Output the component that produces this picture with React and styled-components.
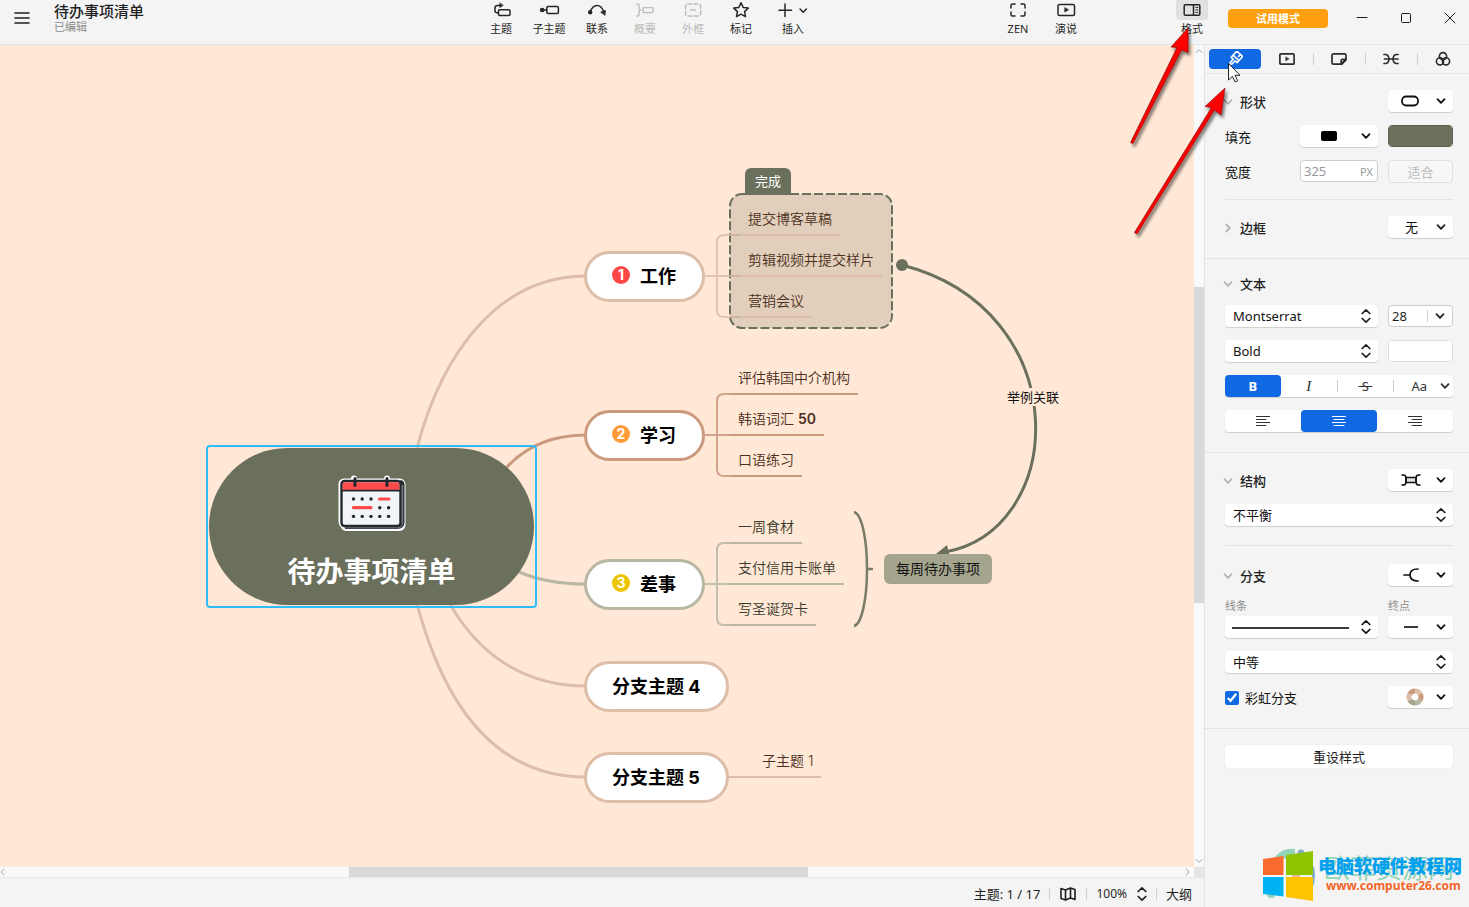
import React, { useState } from "react";
import styled, { createGlobalStyle } from "styled-components";

const UI_FONT = `"Noto Sans", "Noto Sans CJK SC", sans-serif`;
const MAP_FONT = `"Inter", "Noto Sans CJK SC", sans-serif`;

const GlobalStyle = createGlobalStyle`
  * {
    box-sizing: border-box;
  }
  body {
    margin: 0;
    background: #f4f4f4;
    color: #1f1f1f;
    font-family: ${UI_FONT};
    font-size: 13px;
  }
  button, input, select {
    font: inherit;
    color: inherit;
    margin: 0;
  }
  button {
    border: none;
    background: transparent;
    padding: 0;
    cursor: pointer;
  }
  svg {
    display: block;
  }
`;

/* ---------- icons ---------- */

const Icon = ({ w = 24, h = 20, sw = 1.5, children }) => (
  <svg
    width={w}
    height={h}
    viewBox={`0 0 ${w} ${h}`}
    fill="none"
    stroke="currentColor"
    strokeWidth={sw}
    strokeLinecap="round"
    strokeLinejoin="round"
    aria-hidden="true"
  >
    {children}
  </svg>
);

const TopicIcon = () => (
  <Icon>
    <rect x="9.5" y="9.8" width="11.5" height="5.6" rx="1.2" />
    <path d="M9 12.8H8q-2 0-2-2V8q0-2.6 2.6-2.6H11" />
    <path d="M10.8 3.2v4.4L14 5.4z" fill="currentColor" strokeWidth="0.6" />
  </Icon>
);
const SubtopicIcon = () => (
  <Icon>
    <circle cx="5.2" cy="10" r="1.6" fill="currentColor" />
    <path d="M6 10h3.5" />
    <rect x="9.8" y="6.6" width="11.6" height="6.8" rx="1.2" />
  </Icon>
);
const RelationIcon = () => (
  <Icon>
    <circle cx="5.2" cy="12.2" r="1.5" fill="currentColor" />
    <path d="M5.2 11.8C8.5 3.4 15.5 3.4 18.6 11.4" />
    <path d="M16 12l4.4-1.6-.4 4.6z" fill="currentColor" strokeWidth="0.8" />
  </Icon>
);
const SummaryIcon = () => (
  <Icon sw={1.4}>
    <path d="M4 4h.6q1.500 0 1.500 1.500v2.800Q6.100 10 7.600 10 6.100 10 6.100 11.700v2.800q0 1.500-1.500 1.500H4" />
    <rect x="10" y="7.600" width="10" height="5" rx="1" />
  </Icon>
);
const BoundaryIcon = () => (
  <Icon sw={1.4}>
    <rect x="4.600" y="4" width="15" height="12" rx="2" strokeDasharray="4 2.200" />
    <path d="M9.500 10h5" />
  </Icon>
);
const StarIcon = () => (
  <Icon>
    <path d="M12 2.800l2.200 4.600 5 .7-3.600 3.500.9 5-4.500-2.400-4.500 2.400.9-5L4.800 8.100l5-.7z" />
  </Icon>
);
const InsertIcon = () => (
  <Icon w={34}>
    <path d="M9 4v12.500M3 10.200h12.500M24 9l3.200 3.200L30.400 9" />
  </Icon>
);
const ZenIcon = () => (
  <Icon>
    <path d="M5 8V5.500Q5 4 6.500 4H9M15 4h2.500Q19 4 19 5.500V8M19 12v2.500q0 1.500-1.500 1.500H15M9 16H6.500Q5 16 5 14.500V12" />
  </Icon>
);
const PlayIcon = () => (
  <Icon>
    <rect x="4" y="4.500" width="16.500" height="11" rx="1.600" />
    <path d="M10.800 8v4l3.400-2z" fill="currentColor" strokeWidth="0.8" />
  </Icon>
);
const FormatIcon = () => (
  <Icon w={32}>
    <rect x="8.200" y="4.700" width="15.600" height="10.600" rx="1" />
    <path d="M17.500 5v10" />
    <path d="M19.800 7.400h2M19.800 9.900h2M19.800 12.400h2" strokeWidth="1" />
  </Icon>
);
const BrushIcon = () => (
  <Icon w={16} h={16} sw={1.6}>
    <g transform="rotate(42 8 8)">
      <path d="M4 1h8v5.500H4zM4 6.500v2.800h2.800v4q0 1.200 1.200 1.200t1.200-1.200v-4H12V6.500M9 1v2.800" />
    </g>
  </Icon>
);
const TabPlayIcon = () => (
  <Icon w={16} h={16} sw={1.7}>
    <rect x=".9" y="2.800" width="14.200" height="10.400" rx="1" />
    <path d="M6.800 6.200v3.600L9.800 8z" fill="currentColor" strokeWidth="0.6" />
  </Icon>
);
const NoteIcon = () => (
  <Icon w={16} h={16} sw={1.7}>
    <path d="M2.500 2.800h11q1.500 0 1.500 1.500V9l-4.200 4.200H2.500Q1 13.200 1 11.700V4.300q0-1.500 1.500-1.500z" />
    <path d="M14.800 8.300h-3.300q-1.300 0-1.300 1.300v3.500z" />
  </Icon>
);
const BranchesIcon = () => (
  <Icon w={16} h={16} sw={1.7}>
    <path d="M1 3.500h1.500q3 0 3.600 4.500-.6 4.500-3.600 4.500H1M1.500 8h13.500M15 3.500h-1.500q-3 0-3.600 4.500.6 4.500 3.600 4.500H15" />
  </Icon>
);
const RingsIcon = () => (
  <Icon w={16} h={16} sw={1.6}>
    <circle cx="8" cy="5.200" r="3.600" />
    <circle cx="5" cy="10.300" r="3.600" />
    <circle cx="11" cy="10.300" r="3.600" />
  </Icon>
);
const ChevronDown = () => (
  <Icon w={10} h={10} sw={1.8}>
    <path d="M1.500 3.200L5 6.800l3.500-3.600" />
  </Icon>
);
const ChevronRight = () => (
  <Icon w={10} h={10} sw={1.8}>
    <path d="M3.200 1.500L6.800 5 3.200 8.500" />
  </Icon>
);
const UpDown = () => (
  <Icon w={10} h={16} sw={1.7}>
    <path d="M1.200 5.500L5 1.800l3.800 3.700M1.200 10.500L5 14.200l3.800-3.700" />
  </Icon>
);
const AlignIcon = ({ side }) => {
  const x = { left: 0, center: 2, right: 4 }[side];
  return (
    <Icon w={14} h={12} sw={1}>
      <path d={`M0 1.500h14M${x} 4.500h10M0 7.500h14M${x} 10.500h10`} />
    </Icon>
  );
};

/* ---------- shell ---------- */

const Page = styled.div`
  position: relative;
  display: flex;
  flex-direction: column;
  min-height: 100vh;
  overflow: hidden;
`;

const Header = styled.header`
  display: flex;
  align-items: flex-start;
  height: 45px;
  border-bottom: 1px solid #e3e5e8;
`;

const TitleArea = styled.div`
  display: flex;
  flex: 0 1 477px;
  align-items: center;
  gap: 24px;
  padding: 2px 0 0 14px;
  h1 {
    margin: 0;
    font-size: 15px;
    line-height: 18px;
    font-weight: 500;
  }
  p {
    margin: 0;
    font-size: 11px;
    line-height: 14px;
    color: #8a8a8a;
  }
`;

const Spacer = styled.div`
  flex: 1;
`;

const ToolGroup = styled.div`
  display: flex;
  margin-right: ${(p) => p.$after || 0}px;
`;

const Tool = styled.button`
  display: flex;
  flex-direction: column;
  align-items: center;
  width: ${(p) => (p.$wide ? 56 : 48)}px;
  font-size: 11px;
  line-height: 18px;
  white-space: nowrap;
  color: #262626;
  &:disabled {
    color: #bcbcbc;
  }
`;

const ToolIcon = styled.span`
  border-radius: 0 0 4px 4px;
  background: ${(p) => (p.$on ? "#e1e1e1" : "transparent")};
`;

const TrialButton = styled.button`
  width: 100px;
  height: 19px;
  margin: 9px 28px 0 12px;
  border-radius: 4px;
  background: #ff9f0f;
  color: #fff;
  font-size: 11px;
  line-height: 19px;
  font-weight: 700;
`;

const WindowButtons = styled.div`
  display: flex;
  gap: 32px;
  padding: 12px 13px 0 0;
`;

const Body = styled.div`
  display: flex;
  flex: 1;
`;

const Workspace = styled.main`
  display: grid;
  flex: 1;
  min-width: 0;
  grid-template-columns: 1fr 10px;
  grid-template-rows: 1fr 10px auto;
`;

const Canvas = styled.div`
  position: relative;
  overflow: hidden;
  background: #ffe8d6;
  font-family: ${MAP_FONT};
`;

const ScrollBar = styled.div`
  display: flex;
  flex-direction: ${(p) => (p.$vertical ? "column" : "row")};
  align-items: center;
  background: #f9f9f9;
  color: #a8a8a8;
`;

const Rail = styled.div`
  display: grid;
  flex: 1;
  align-self: stretch;
  grid-template: ${(p) => (p.$vertical ? "230fr 316fr 252fr / 1fr" : "1fr / 339fr 459fr 376fr")};
`;

const Thumb = styled.div`
  grid-area: ${(p) => (p.$vertical ? "2 / 1" : "1 / 2")};
  background: #d9d9d9;
`;

const Corner = styled.div`
  background: #e6e6e6;
`;

const StatusBar = styled.footer`
  grid-column: 1 / -1;
  display: flex;
  justify-content: flex-end;
  align-items: center;
  gap: 9px;
  height: 30px;
  padding: 2px 12px 0 0;
  border-top: 1px solid #e6e6e6;
`;

const StatusButton = styled.button`
  display: flex;
  align-items: center;
  gap: 10px;
  font-size: ${(p) => (p.$small ? 12 : 13)}px;
`;

const Bar = styled.i`
  width: 1px;
  height: 12px;
  background: #cfcfcf;
`;

/* ---------- mind map ---------- */

const Wires = styled.svg`
  position: absolute;
  left: 0;
  top: 0;
`;

const Placed = styled.div`
  position: absolute;
  left: ${(p) => p.$x}px;
  top: ${(p) => p.$y}px;
`;

const Root = styled(Placed)`
  padding: 1px;
  border: 2px solid #2ebcfb;
  border-radius: 4px;
`;

const RootShape = styled.div`
  display: flex;
  flex-direction: column;
  align-items: center;
  gap: 20px;
  width: 325px;
  height: 157px;
  padding-top: 27px;
  border-radius: 79px;
  background: #6b705c;
  color: #fff;
  font-size: 28px;
  line-height: 40px;
  font-weight: 700;
`;

const Branch = styled(Placed)`
  display: flex;
  align-items: center;
  gap: 10px;
  height: 51px;
  padding: 0 26px 3px 25px;
  border: 3px solid ${(p) => p.$color};
  border-radius: 26px;
  background: #fff;
  color: #000;
  font-size: 18px;
  font-weight: 700;
  white-space: nowrap;
`;

const Marker = styled.span`
  width: 18px;
  height: 18px;
  border-radius: 50%;
  background: ${(p) => p.$color};
  color: #fff;
  font-size: 14px;
  line-height: 18px;
  text-align: center;
`;

const Leaves = styled(Placed)`
  display: flex;
  flex-direction: column;
  align-items: flex-start;
  gap: 12px;
`;

const Leaf = styled.div`
  height: 29px;
  padding: 0 8px;
  border-bottom: 2px solid ${(p) => p.$color};
  color: ${(p) => p.$ink || "#4d2f20"};
  font-size: 14px;
  line-height: 24px;
  font-weight: 350;
  white-space: nowrap;
  b {
    font-weight: 600;
  }
`;

const BoundaryTag = styled(Placed)`
  height: 27px;
  padding: 0 10px;
  border-radius: 6px 6px 0 0;
  background: #6b705c;
  color: #fff;
  font-size: 13px;
  line-height: 26px;
`;

const LinkLabel = styled(Placed)`
  background: #ffe8d6;
  color: #111;
  font-size: 13px;
  line-height: 18px;
`;

const SummaryTopic = styled(Placed)`
  padding: 0 12px;
  border-radius: 6px;
  background: #a5a58d;
  color: #111;
  font-size: 14px;
  line-height: 30px;
`;

const CalendarIcon = () => (
  <svg width="68" height="57" viewBox="0 0 68 57" aria-hidden="true">
    <path
      d="M6 3.500H13Q13 .5 16 .5t3 3H46Q46 .5 49 .5t3 3H62Q67.500 4.500 67.500 10V49Q67.500 56 61 56H9Q4 56 3 52 .5 50 .5 47V9Q.5 4 6 3.500z"
      fill="#fff"
    />
    <path d="M7 52.500H59Q65 52.500 65 47V10Q65 7 62 6.500" fill="none" stroke="#23282f" strokeWidth="3" />
    <path d="M6.500 52.800H59.500q5-.3 5.200-5.400V10" fill="none" stroke="#8b9096" strokeWidth="1" />
    <rect x="3.500" y="6" width="59" height="45" rx="3" fill="#f2f4f7" stroke="#23282f" strokeWidth="2.400" />
    <path d="M4.700 15V9q0-1.800 2-1.800h52.600q2 0 2 1.800v6z" fill="#ff4b4b" />
    <path d="M4 15.600h58" stroke="#23282f" strokeWidth="1.600" />
    <path d="M17 3.500v7M49 3.500v7" stroke="#23282f" strokeWidth="3" strokeLinecap="round" />
    <path d="M41.500 24h9.500M15.500 32.700h17.500" stroke="#ff4b4b" strokeWidth="3.200" strokeLinecap="round" />
    <g fill="#23282f">
      {[15.5, 24.2, 33].map((x) => (
        <circle key={x} cx={x} cy="24" r="1.700" />
      ))}
      {[41.8, 50.6].map((x) => (
        <circle key={x} cx={x} cy="32.700" r="1.700" />
      ))}
      {[15.5, 24.2, 33, 41.8, 50.6].map((x) => (
        <circle key={x} cx={x} cy="41.400" r="1.700" />
      ))}
    </g>
  </svg>
);

const bracket = (y) =>
  `M705 ${y}H730M730 ${y - 41}h-6q-7 0-7 7v68q0 7 7 7h6`;

const groups = [
  {
    name: "工作",
    n: 1,
    marker: "#ff4646",
    color: "#ddbea9",
    y: 206,
    leafX: 740,
    leaves: ["提交博客草稿", "剪辑视频并提交样片", "营销会议"],
  },
  {
    name: "学习",
    n: 2,
    marker: "#ff9b37",
    color: "#cb997e",
    y: 365,
    leafX: 730,
    leaves: ["评估韩国中介机构", <>韩语词汇 <b>50</b></>, "口语练习"],
  },
  {
    name: "差事",
    n: 3,
    marker: "#ecc500",
    color: "#b7b7a4",
    ink: "#3a3a2c",
    y: 514,
    leafX: 730,
    leaves: ["一周食材", "支付信用卡账单", "写圣诞贺卡"],
  },
];

const MindMap = () => (
  <Canvas>
    <Wires width="1194" height="822" viewBox="0 45 1194 822" fill="none">
      <rect x="730" y="194" width="162" height="134" rx="12" fill="#e1cfbc" stroke="#6b705c" strokeWidth="2" strokeDasharray="9 3" />
      <g strokeWidth="3">
        <path d="M417 448C443 350 500 276 586 276" stroke="#ddbea9" />
        <path d="M506 468C526 446 552 435 586 435" stroke="#cb997e" />
        <path d="M519 572C540 581 560 584 586 584" stroke="#b7b7a4" />
        <path d="M450 604C482 660 530 686 586 686" stroke="#ddbea9" />
        <path d="M417 604C446 712 500 777 586 777" stroke="#ddbea9" />
      </g>
      <g strokeWidth="2" opacity=".85">
        <path d={bracket(276)} stroke="#ddbea9" />
        <path d="M730 235h10M730 276h10M730 317h10" stroke="#ccb09b" />
        <path d={bracket(435)} stroke="#cb997e" />
        <path d={bracket(584)} stroke="#b7b7a4" />
      </g>
      <path d="M728 777h26" stroke="#ddbea9" strokeWidth="2" />
      <path d="M854 512C862 514 867 540 867 569S862 624 854 626M867 569h6" stroke="#6b705c" strokeWidth="2.500" opacity=".9" />
      <path d="M902 265C1077 310 1068 530 945 552" stroke="#6b705c" strokeWidth="3" />
      <circle cx="902" cy="265" r="6" fill="#6b705c" />
      <path d="M936 554l11-9 3 13z" fill="#6b705c" />
    </Wires>

    <Root $x={206} $y={400}>
      <RootShape>
        <CalendarIcon />
        待办事项清单
      </RootShape>
    </Root>

    {groups.map((g) => (
      <React.Fragment key={g.n}>
        <Branch $x={584} $y={g.y} $color={g.color}>
          <Marker $color={g.marker}>{g.n}</Marker>
          {g.name}
        </Branch>
        <Leaves $x={g.leafX} $y={g.y - 44}>
          {g.leaves.map((leaf, i) => (
            <Leaf key={i} $color={g.color} $ink={g.ink}>
              {leaf}
            </Leaf>
          ))}
        </Leaves>
      </React.Fragment>
    ))}
    <Branch $x={584} $y={616} $color="#ddbea9">分支主题 4</Branch>
    <Branch $x={584} $y={707} $color="#ddbea9">分支主题 5</Branch>
    <Leaves $x={754} $y={704}>
      <Leaf $color="#ddbea9">子主题 1</Leaf>
    </Leaves>

    <BoundaryTag $x={745} $y={123}>完成</BoundaryTag>
    <LinkLabel $x={1007} $y={343}>举例关联</LinkLabel>
    <SummaryTopic $x={884} $y={509}>每周待办事项</SummaryTopic>
  </Canvas>
);

/* ---------- side panel ---------- */

const Panel = styled.aside`
  width: 265px;
  border-left: 1px solid #e3e3e3;
  background: #f4f4f4;
`;

const Tabs = styled.div`
  display: flex;
  height: 29px;
  padding: 4px 0 4px 4px;
  border-bottom: 1px solid #e6e6e6;
`;

const Tab = styled.button`
  display: flex;
  flex: 1;
  align-items: center;
  justify-content: center;
  border-radius: 4px;
  background: ${(p) => (p.$on ? "#1068e2" : "transparent")};
  color: ${(p) => (p.$on ? "#fff" : "#2c2c2c")};
`;

const TabBar = styled(Bar)`
  align-self: center;
  margin: 0 -1px 0 0;
`;

const Section = styled.section`
  padding: 16px 16px 19px 20px;
  border-bottom: ${(p) => (p.$last ? "none" : "1px solid #e3e3e3")};
`;

const Stack = styled.div`
  display: flex;
  flex-direction: column;
  gap: 12px;
`;

const Row = styled.div`
  display: grid;
  grid-template-columns: ${(p) => p.$cols || "1fr 65px"};
  gap: 10px;
  align-items: center;
  min-height: ${(p) => (p.$title ? 18 : 23)}px;
`;

const Divider = styled.hr`
  height: 1px;
  margin: ${(p) => p.$space}px 0;
  border: none;
  background: #e3e3e3;
`;

const Fold = styled.button`
  display: flex;
  align-items: center;
  gap: 7px;
  margin-left: -2px;
  font-size: 13px;
  line-height: 18px;
  font-weight: 500;
  svg {
    color: #b4b4b4;
  }
`;

const Label = styled.label`
  color: #111;
  line-height: 18px;
`;

const SmallLabel = styled.label`
  display: block;
  padding-bottom: 3px;
  font-size: 11px;
  line-height: 14px;
  color: #8f8f8f;
`;

const PickerButton = styled.button`
  display: flex;
  width: 100%;
  align-items: center;
  justify-content: flex-end;
  height: 22px;
  margin-bottom: 1px;
  padding-right: 7px;
  gap: ${(p) => p.$gap || 17}px;
  border-radius: 4px;
  background: #fff;
  box-shadow: 0 1px 1px #cfcfcf;
  color: #111;
`;

const SelectBox = styled.div`
  display: grid;
  align-items: center;
  height: 22px;
  margin-bottom: 1px;
  border-radius: 4px;
  background: #fff;
  box-shadow: 0 1px 1px #cfcfcf;
  select,
  svg {
    grid-area: 1 / 1;
  }
  select {
    width: 100%;
    height: 22px;
    padding: 0 24px 0 ${(p) => p.$pad || 8}px;
    border: none;
    border-radius: 4px;
    outline: none;
    appearance: none;
    background: transparent;
    color: #111;
    font-size: 13px;
  }
  svg {
    justify-self: end;
    margin-right: 7px;
    pointer-events: none;
  }
`;

const Field = styled.div`
  display: flex;
  align-items: center;
  height: 22px;
  margin-bottom: 1px;
  border: 1px solid #cdcdcd;
  border-radius: 4px;
  background: #fff;
  input {
    flex: 1;
    width: 0;
    padding: 0 0 0 3px;
    border: none;
    outline: none;
    background: transparent;
  }
  input:disabled {
    color: #9a9a9a;
  }
  span {
    padding-right: 4px;
    font-size: 11px;
    color: #9a9a9a;
  }
  button {
    padding: 0 7px;
  }
`;

const FitButton = styled.button`
  height: 23px;
  border: 1px solid #e0e0e0;
  border-radius: 4px;
  background: #f7f7f7;
  color: #bdbdbd;
`;

const ColorInput = styled.input`
  width: 100%;
  height: 22px;
  margin-bottom: 1px;
  padding: 0;
  border: 1px solid ${(p) => p.$edge};
  border-radius: 4px;
  overflow: hidden;
  appearance: none;
  background: none;
  &::-webkit-color-swatch-wrapper {
    padding: 0;
  }
  &::-webkit-color-swatch {
    border: none;
    border-radius: 0;
  }
`;

const Segments = styled.div`
  display: flex;
  align-items: center;
  height: 22px;
  margin-bottom: 1px;
  border-radius: 4px;
  background: #fff;
  box-shadow: 0 1px 1px #cfcfcf;
`;

const Segment = styled.button`
  display: flex;
  flex: 1;
  align-items: center;
  justify-content: ${(p) => (p.$menu ? "flex-end" : "center")};
  gap: 13px;
  height: 22px;
  padding-right: ${(p) => (p.$menu ? 3 : 0)}px;
  border-radius: 4px;
  background: ${(p) => (p.$on ? "#1068e2" : "transparent")};
  color: ${(p) => (p.$on ? "#fff" : "#333")};
  i {
    font-family: "Liberation Serif", serif;
    font-size: 15px;
  }
`;

const CheckLabel = styled.label`
  display: flex;
  align-items: center;
  gap: 6px;
  color: #111;
  input {
    width: 14px;
    height: 14px;
    accent-color: #1068e2;
  }
`;

const ResetButton = styled.button`
  width: 100%;
  height: 23px;
  border-radius: 4px;
  background: #fff;
  box-shadow: 0 0 1px #ccc;
`;

const tabs = [
  { id: "style", title: "样式", icon: <BrushIcon /> },
  { id: "pitch", title: "演说", icon: <TabPlayIcon /> },
  { id: "sheet", title: "画布", icon: <NoteIcon /> },
  { id: "skeleton", title: "骨架", icon: <BranchesIcon /> },
  { id: "theme", title: "配色", icon: <RingsIcon /> },
];

const Picker = ({ label, gap, children }) => (
  <PickerButton aria-label={label} aria-haspopup="listbox" $gap={gap}>
    {children}
    <ChevronDown />
  </PickerButton>
);

const Choice = ({ label, value, options = [], pad, down }) => (
  <SelectBox $pad={pad}>
    <select aria-label={label} defaultValue={value}>
      {[value, ...options].map((o) => (
        <option key={o}>{o}</option>
      ))}
    </select>
    {down ? <ChevronDown /> : <UpDown />}
  </SelectBox>
);

const FormatPanel = () => {
  const [tab, setTab] = useState("style");
  const [align, setAlign] = useState("center");
  const [bold, setBold] = useState(true);
  const [italic, setItalic] = useState(false);
  const [strike, setStrike] = useState(false);

  return (
    <Panel>
      <Tabs role="tablist">
        {tabs.map((t, i) => (
          <React.Fragment key={t.id}>
            {i > 1 && <TabBar />}
            <Tab role="tab" aria-selected={tab === t.id} aria-label={t.title} $on={tab === t.id} onClick={() => setTab(t.id)}>
              {t.icon}
            </Tab>
          </React.Fragment>
        ))}
      </Tabs>

      <Section>
        <Stack>
          <Row>
            <Fold><ChevronDown />形状</Fold>
            <Picker label="形状">
              <Icon w={18} h={12} sw={1.8}>
                <rect x="1" y="1.500" width="16" height="9" rx="4.200" />
              </Icon>
            </Picker>
          </Row>
          <Row $cols="1fr 78px 65px">
            <Label htmlFor="fill">填充</Label>
            <Picker label="填充样式" gap={24}>
              <Icon w={16} h={10} sw={0}>
                <rect width="16" height="10" rx="2" fill="#000" />
              </Icon>
            </Picker>
            <ColorInput id="fill" type="color" defaultValue="#6b705c" $edge="#5c614f" />
          </Row>
          <Row $cols="1fr 78px 65px">
            <Label htmlFor="width">宽度</Label>
            <Field>
              <input id="width" defaultValue="325" disabled />
              <span>PX</span>
            </Field>
            <FitButton disabled>适合</FitButton>
          </Row>
        </Stack>
        <Divider $space={16} />
        <Row>
          <Fold><ChevronRight />边框</Fold>
          <Choice label="边框" value="无" options={["实线", "虚线"]} pad={17} down />
        </Row>
      </Section>

      <Section>
        <Stack>
          <Row $title>
            <Fold><ChevronDown />文本</Fold>
          </Row>
          <Row>
            <Choice label="字体" value="Montserrat" options={["Roboto"]} />
            <Field>
              <input aria-label="字号" defaultValue="28" />
              <Bar />
              <button aria-label="选择字号"><ChevronDown /></button>
            </Field>
          </Row>
          <Row>
            <Choice label="字重" value="Bold" options={["Regular"]} />
            <ColorInput type="color" aria-label="文本颜色" defaultValue="#ffffff" $edge="#dedede" />
          </Row>
          <Segments>
            <Segment aria-pressed={bold} $on={bold} onClick={() => setBold(!bold)}><b>B</b></Segment>
            <Segment aria-pressed={italic} $on={italic} onClick={() => setItalic(!italic)}><i>I</i></Segment>
            <Bar />
            <Segment aria-pressed={strike} $on={strike} onClick={() => setStrike(!strike)}><s>&nbsp;S&nbsp;</s></Segment>
            <Bar />
            <Segment aria-haspopup="listbox" $menu>Aa<ChevronDown /></Segment>
          </Segments>
          <Segments>
            {["left", "center", "right"].map((side) => (
              <Segment key={side} aria-label={side} aria-pressed={align === side} $on={align === side} onClick={() => setAlign(side)}>
                <AlignIcon side={side} />
              </Segment>
            ))}
          </Segments>
        </Stack>
      </Section>

      <Section>
        <Stack>
          <Row>
            <Fold><ChevronDown />结构</Fold>
            <Picker label="结构" gap={15}>
              <Icon w={20} h={12} sw={1.6}>
                <rect x="5" y="3.500" width="10" height="5" fill="#e4e4e4" />
                <path d="M1 1h1.500Q4.500 1 5 3.500v5Q4.500 11 2.500 11H1M19 1h-1.500Q15.500 1 15 3.500v5q.5 2.500 2.500 2.500H19" />
              </Icon>
            </Picker>
          </Row>
          <Choice label="结构布局" value="不平衡" options={["平衡"]} />
        </Stack>
        <Divider $space={18} />
        <Stack>
          <Row>
            <Fold><ChevronDown />分支</Fold>
            <Picker label="分支">
              <Icon w={16} h={14} sw={1.7}>
                <path d="M1 7h6M15 1C9 1 7 3.500 7 7s2 6 8 6" />
              </Icon>
            </Picker>
          </Row>
          <Row>
            <div>
              <SmallLabel htmlFor="line">线条</SmallLabel>
              <PickerButton id="line" aria-haspopup="listbox" $gap={12}>
                <Icon w={117} h={4} sw={2}>
                  <path d="M0 3h117" stroke="#3a3a3a" strokeLinecap="butt" />
                </Icon>
                <UpDown />
              </PickerButton>
            </div>
            <div>
              <SmallLabel htmlFor="end">终点</SmallLabel>
              <PickerButton id="end" aria-haspopup="listbox">
                <Icon w={16} h={4} sw={2}>
                  <path d="M1 2h14" stroke="#3a3a3a" strokeLinecap="butt" />
                </Icon>
                <ChevronDown />
              </PickerButton>
            </div>
          </Row>
          <Choice label="粗细" value="中等" options={["细", "粗"]} />
          <Row>
            <CheckLabel>
              <input type="checkbox" defaultChecked />
              彩虹分支
            </CheckLabel>
            <Picker label="彩虹配色" gap={12}>
              <svg width="18" height="18" viewBox="-9 -9 18 18" fill="none" strokeWidth="5" aria-hidden="true">
                <path d="M0-6A6 6 0 0 1 5.200-3" stroke="#ddbea9" />
                <path d="M5.200-3A6 6 0 0 1 5.200 3" stroke="#cb997e" />
                <path d="M5.200 3A6 6 0 0 1 0 6" stroke="#b7b7a4" />
                <path d="M0 6A6 6 0 0 1-5.200 3" stroke="#a5a58d" />
                <path d="M-5.200 3A6 6 0 0 1-5.200-3" stroke="#ddbea9" />
                <path d="M-5.200-3A6 6 0 0 1 0-6" stroke="#cb997e" />
              </svg>
            </Picker>
          </Row>
        </Stack>
      </Section>

      <Section $last>
        <ResetButton>重设样式</ResetButton>
      </Section>
    </Panel>
  );
};

/* ---------- overlays ---------- */

const Pointers = styled.svg`
  position: absolute;
  right: 229px;
  top: 20px;
  pointer-events: none;
`;

const Watermark = styled.div`
  position: absolute;
  right: 7px;
  bottom: 5px;
  display: flex;
  align-items: center;
  gap: 3px;
  pointer-events: none;
`;

const WatermarkText = styled.div`
  position: relative;
  white-space: nowrap;
  font-weight: 700;
  strong {
    position: relative;
    display: block;
    color: #00a0ee;
    font-size: 18px;
    line-height: 22px;
  }
  span {
    position: relative;
    display: block;
    padding-left: 8px;
    color: #f4652a;
    font-size: 12px;
    line-height: 18px;
  }
  em {
    position: absolute;
    left: 6px;
    top: 0;
    color: #93d3b8;
    font-size: 26px;
    line-height: 26px;
    font-style: normal;
    font-weight: 400;
  }
`;

const tools = [
  { name: "主题", icon: <TopicIcon /> },
  { name: "子主题", icon: <SubtopicIcon /> },
  { name: "联系", icon: <RelationIcon /> },
  { name: "概要", icon: <SummaryIcon />, disabled: true },
  { name: "外框", icon: <BoundaryIcon />, disabled: true },
  { name: "标记", icon: <StarIcon /> },
  { name: "插入", icon: <InsertIcon />, wide: true },
];

const App = () => (
  <Page>
    <GlobalStyle />
    <Header>
      <TitleArea>
        <button aria-label="菜单">
          <Icon w={16} h={14} sw={1.6}>
            <path d="M1 2h14M1 7h14M1 12h14" />
          </Icon>
        </button>
        <div>
          <h1>待办事项清单</h1>
          <p>已编辑</p>
        </div>
      </TitleArea>
      <ToolGroup>
        {tools.map((t) => (
          <Tool key={t.name} disabled={t.disabled} $wide={t.wide}>
            <ToolIcon>{t.icon}</ToolIcon>
            {t.name}
          </Tool>
        ))}
      </ToolGroup>
      <Spacer />
      <ToolGroup $after={78}>
        <Tool><ToolIcon><ZenIcon /></ToolIcon>ZEN</Tool>
        <Tool><ToolIcon><PlayIcon /></ToolIcon>演说</Tool>
      </ToolGroup>
      <ToolGroup>
        <Tool><ToolIcon $on><FormatIcon /></ToolIcon>格式</Tool>
      </ToolGroup>
      <TrialButton>试用模式</TrialButton>
      <WindowButtons>
        <button aria-label="最小化"><Icon w={12} h={12} sw={1}><path d="M1 5.500h10" /></Icon></button>
        <button aria-label="最大化"><Icon w={12} h={12} sw={1}><rect x="1.500" y="1.500" width="9" height="9" rx="1" /></Icon></button>
        <button aria-label="关闭"><Icon w={12} h={12} sw={1}><path d="M1 1l10 10M11 1L1 11" /></Icon></button>
      </WindowButtons>
    </Header>

    <Body>
      <Workspace>
        <MindMap />
        <ScrollBar $vertical>
          <Icon w={10} h={12} sw={1}><path d="M2 7.500l3-3 3 3" /></Icon>
          <Rail $vertical><Thumb $vertical /></Rail>
          <Icon w={10} h={12} sw={1}><path d="M2 4.500l3 3 3-3" /></Icon>
        </ScrollBar>
        <ScrollBar>
          <Icon w={10} h={10} sw={1}><path d="M4 2L1 5l3 3" /></Icon>
          <Rail><Thumb /></Rail>
          <Icon w={10} h={10} sw={1}><path d="M2 2l3 3-3 3" /></Icon>
        </ScrollBar>
        <Corner />
        <StatusBar>
          <span>主题: 1 / 17</span>
          <Bar />
          <StatusButton aria-label="导图">
            <Icon w={18} h={16} sw={1.6}>
              <path d="M2 2.500l4.500 1.500 5-2 4.500 1.500v10l-4.500-1.500-5 2L2 12.500zM6.500 4v10M11.500 2v10" />
            </Icon>
          </StatusButton>
          <Bar />
          <StatusButton $small>100%<UpDown /></StatusButton>
          <Bar />
          <StatusButton>大纲</StatusButton>
        </StatusBar>
      </Workspace>
      <FormatPanel />
    </Body>

    <Pointers width="120" height="220" viewBox="1120 20 120 220">
      <defs>
        <filter id="shade" x="-20%" y="-20%" width="150%" height="150%">
          <feDropShadow dx="2" dy="3" stdDeviation="1.500" floodOpacity=".5" />
        </filter>
      </defs>
      <g fill="#fe0000" stroke="#8c1010" strokeWidth=".7" filter="url(#shade)">
        <path d="M1130.500 142.500L1177 47.500l-6-.5L1188 28l0 24.500-6.500-2.500L1133 143.500z" />
        <path d="M1134.500 232.500L1211.500 107.500l-6.500-1L1225 88l-4 27-6.500-5L1137 234z" />
      </g>
      <path d="M1228.500 63.500v16.500l3.900-3.700 2.700 5.700 2.600-1.200-2.700-5.500h5z" fill="#fff" stroke="#222" strokeWidth="1" />
    </Pointers>

    <Watermark>
      <svg width="52" height="54" viewBox="0 0 52 54" aria-hidden="true">
        <path d="M11 10Q20-1 32 1v10z" fill="#93d3b8" />
        <circle cx="38" cy="5" r="3.500" fill="#7fa9cf" />
        <path d="M49 14q6 13 0 28z" fill="#7fa9cf" />
        <ellipse cx="8" cy="47" rx="4" ry="3" fill="#93d3b8" />
        <circle cx="33" cy="27" r="4" fill="#f2b98a" />
        <path d="M0 11l20.500-3v19H0z" fill="#fb6a2d" />
        <path d="M23 7l27-4v24H23z" fill="#8fc400" />
        <path d="M0 29h20.500v19.500L0 46z" fill="#00b3f4" />
        <path d="M23 29h27v24l-27-4z" fill="#ffc400" />
      </svg>
      <WatermarkText>
        <em>欧菲资源网</em>
        <strong>电脑软硬件教程网</strong>
        <span>www.computer26.com</span>
      </WatermarkText>
    </Watermark>
  </Page>
);

export default App;
